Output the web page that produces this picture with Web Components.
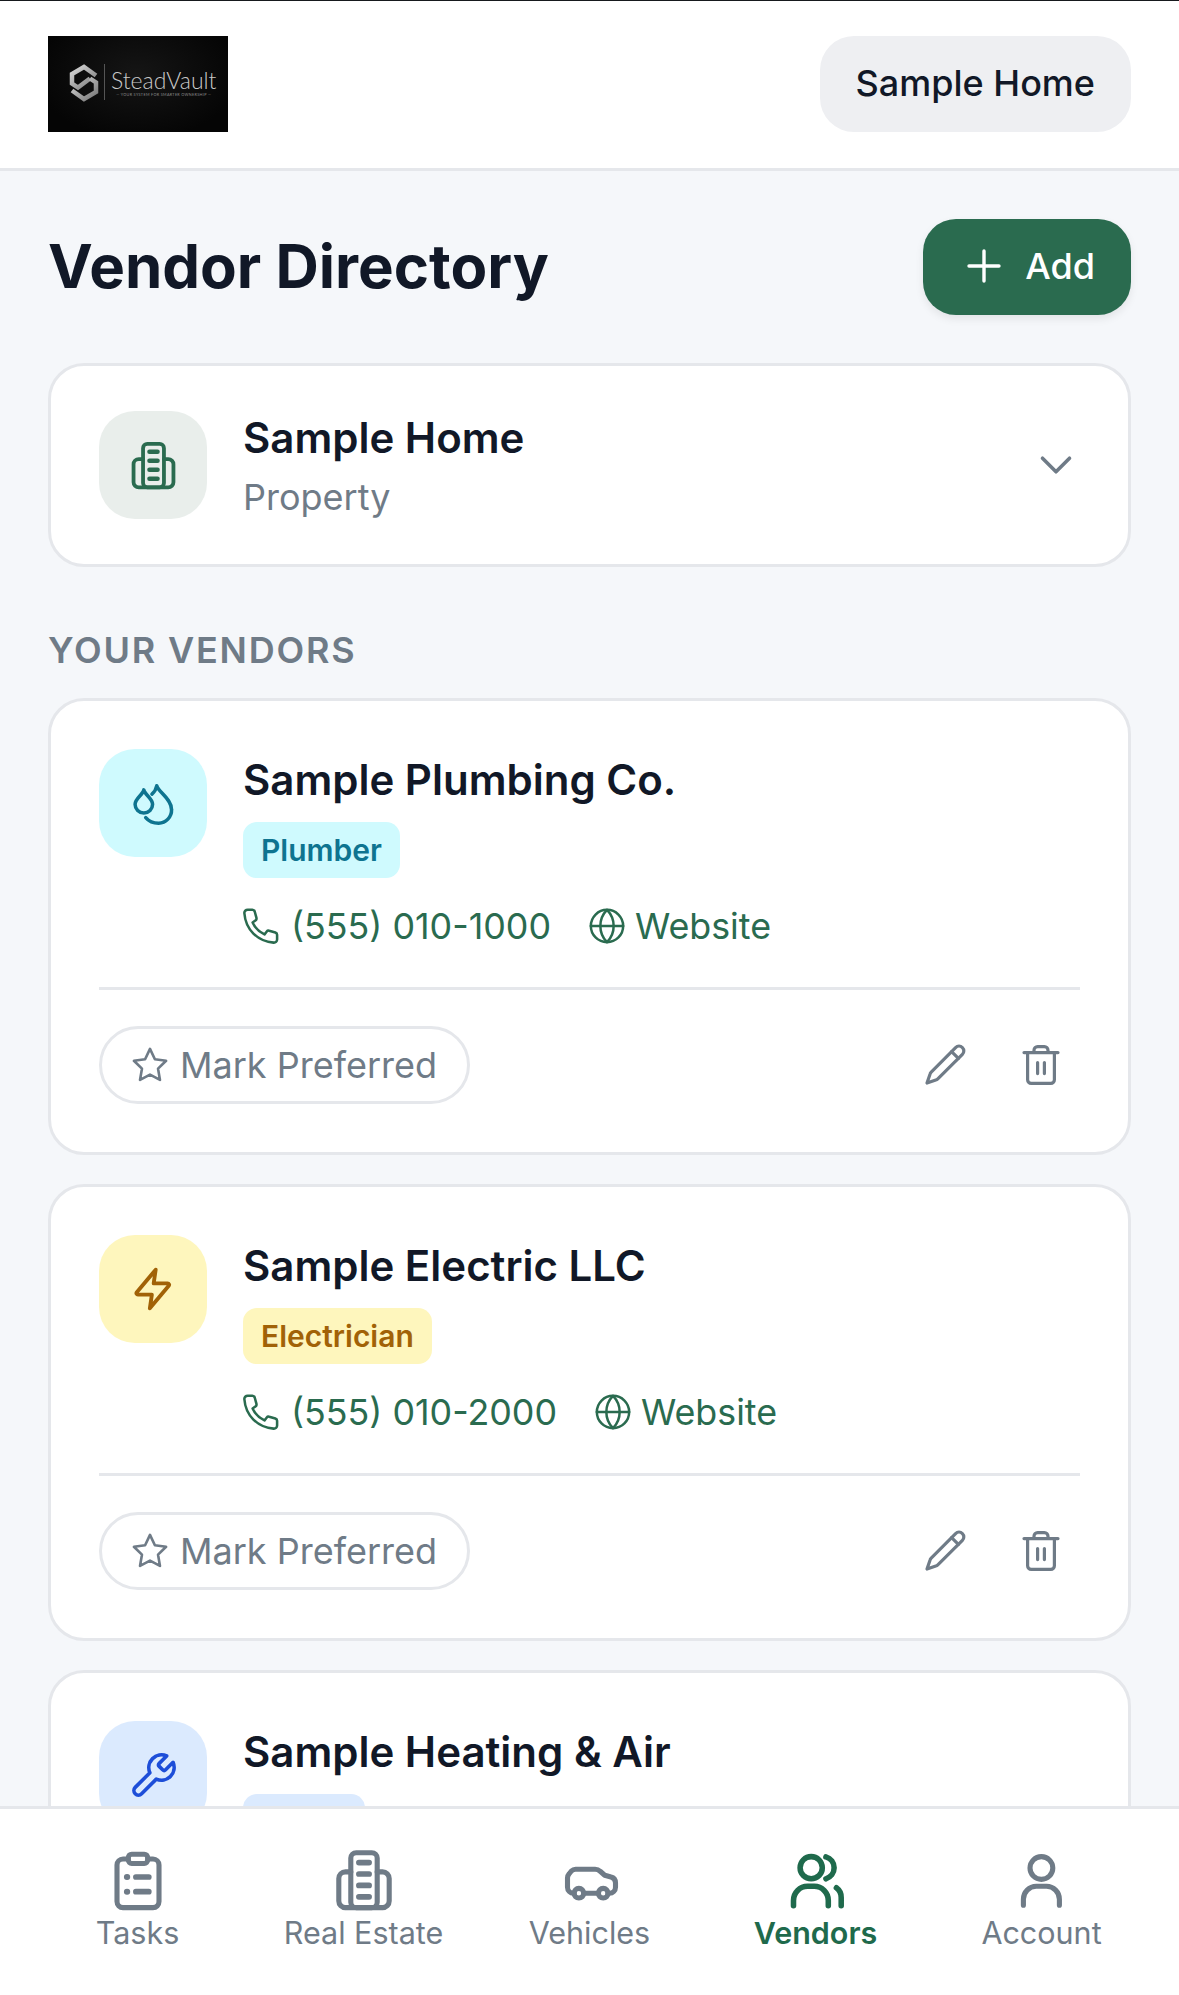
<!DOCTYPE html>
<html lang="en">
<head>
<meta charset="utf-8">
<title>Vendor Directory</title>
<style>
  html, body { margin: 0; height: 100%; }
  body { font-family: Inter, "Liberation Sans", sans-serif; background: #f5f7fa; color: #111827; overflow: hidden; }
</style>
</head>
<body>
<vendor-app>
  <top-bar slot="top"></top-bar>
  <page-title slot="main">Vendor Directory</page-title>
  <property-select slot="main" name="Sample Home" sub="Property"></property-select>
  <section-label slot="main">YOUR VENDORS</section-label>
  <vendor-card slot="main" name="Sample Plumbing Co." kind="Plumber" phone="(555) 010-1000" icon="drops" isize="50" bg="#cffafe" fg="#0e7490"></vendor-card>
  <vendor-card slot="main" name="Sample Electric LLC" kind="Electrician" phone="(555) 010-2000" icon="bolt" isize="54" bg="#fef6bd" fg="#a16207"></vendor-card>
  <!-- only the top of this one shows above the nav -->
  <vendor-card slot="main" name="Sample Heating &amp; Air" icon="wrench" isize="51" bg="#dbeafe" fg="#1d4ed8"></vendor-card>
  <bottom-nav slot="nav"></bottom-nav>
</vendor-app>

<script>
  // icon paths, all on a 24 unit box
  const ICONS = {
    building: '<rect x="7.6" y="2.9" width="8.8" height="18.3" rx="1.8"/><path d="M7.600 9.300H5.800a2.200 2.200 0 0 0-2.200 2.200V19a2.200 2.200 0 0 0 2.200 2.200h12.400a2.200 2.200 0 0 0 2.200-2.200v-7.500a2.200 2.200 0 0 0-2.200-2.200h-1.800"/><path d="M10.300 6.200h3.400M10.300 10h3.400M10.300 13.800h3.400M10.300 17.600h3.400" stroke-width="1.900"/>',
    plus: '<path d="M12 4.500v15M4.500 12h15"/>',
    chevron: '<path d="M6 9l6 6 6-6"/>',
    drops: '<path d="M7.600 5.700C8 8 11.800 9.800 11.800 12.600A4.200 4.200 0 0 1 3.400 12.600C3.400 9.800 7.200 8 7.600 5.700z"/><path d="M11.500 7.700C12.700 6.700 13.500 5.300 13.800 3.700C14.400 6.700 20.900 9.800 20.900 15.200A6.300 6.300 0 0 1 14.700 21.700C12.300 21.700 10 20.800 8.500 19"/>',
    bolt: '<path d="M13.200 3.400 4.800 13.400c-.4.500-.1 1.100.5 1.100h6.200l-.9 6.100 8.400-10c.4-.5.1-1.100-.5-1.100h-6.200z"/>',
    wrench: '<path d="M14.700 6.300a1 1 0 0 0 0 1.400l1.600 1.600a1 1 0 0 0 1.400 0l3.500-3.500a6 6 0 0 1-7.900 7.900l-6.900 6.900a2.100 2.100 0 0 1-3-3l6.900-6.900a6 6 0 0 1 7.900-7.900z"/>',
    phone: '<path d="M4.400 2.700h2.700c.6 0 1.100.4 1.300 1l1 3.700c.1.500 0 1-.4 1.300L7.200 10c1.300 2.900 3.700 5.300 6.800 6.800l1.300-1.700c.3-.4.900-.6 1.400-.4l3.500 1c.6.200 1 .7 1 1.300v2.700c0 1.100-.9 1.900-2 1.800C10 20.800 3.200 14 2.500 4.700c-.1-1.100.8-2 1.900-2z"/>',
    globe: '<circle cx="12" cy="12" r="9.700"/><path d="M2.300 12h19.400M12 2.300c2.600 2.600 4 6 4 9.700s-1.400 7.100-4 9.700c-2.600-2.600-4-6-4-9.700s1.400-7.100 4-9.700z"/>',
    star: '<path d="M12 2.800l2.800 5.900 6.400.9-4.600 4.500 1.100 6.400L12 17.500l-5.700 3 1.100-6.400-4.600-4.500 6.400-.9z"/>',
    pencil: '<path d="M17.300 3.300a2.400 2.400 0 0 1 3.400 3.400L8.400 18.900c-.3.300-.6.500-1 .6l-4.400 1.500 1.500-4.400c.1-.4.300-.7.600-1z"/><path d="M15.300 5.300l3.400 3.400"/>',
    trash: '<path d="M3.500 5.800h17M8.500 5.800V4.600c0-1 .8-1.800 1.800-1.800h3.400c1 0 1.800.8 1.800 1.800v1.200M5.300 5.800v13.600c0 1 .8 1.800 1.800 1.800h9.800c1 0 1.800-.8 1.800-1.800V5.800"/><path d="M10.300 10.800v5.500M13.700 10.800v5.500"/>',
    tasks: '<rect x="5" y="5" width="14" height="16.200" rx="2"/><rect x="8.800" y="3.400" width="6.400" height="3.100" rx="1.100" fill="#fff"/><path d="M11.300 11h4.300M11.300 15.900h4.300" stroke-width="1.900"/><path d="M8.300 11h.1M8.300 15.900h.1" stroke-width="2"/>',
    car: '<path d="M6.700 16.400h-.2a2 2 0 0 1-2-2v-3.100a2 2 0 0 1 .5-1.300l.8-1a2 2 0 0 1 1.500-.6h6.400a2.500 2.500 0 0 1 1.700.7l1.500 1.300 2.100.6a2 2 0 0 1 1.500 1.900v1.500a2 2 0 0 1-2 2H18M9.900 16.400h4.900"/><circle cx="8.300" cy="16.400" r="1.600"/><circle cx="16.400" cy="16.400" r="1.600"/>',
    users: '<circle cx="10.400" cy="7.900" r="3.700"/><path d="M15.300 4.300a3.800 3.800 0 0 1 0 7.300M4.500 20.600v-1.800a4.700 4.700 0 0 1 4.700-4.700h2.200a4.700 4.700 0 0 1 4.700 4.700v1.800M18.800 14.600a4 4 0 0 1 1.600 3.200v2.800"/>',
    user: '<circle cx="11.800" cy="8" r="3.800"/><path d="M5.800 20.400v-2a4.300 4.300 0 0 1 4.300-4.300h3.400a4.300 4.300 0 0 1 4.300 4.300v2"/>'
  };

  class IconGlyph extends HTMLElement {
    connectedCallback() {
      const size = this.getAttribute("size") || 48;
      const sw = this.getAttribute("sw") || 1.5;
      this.attachShadow({ mode: "open" }).innerHTML = `
        <style>
          :host { display: block; width: ${size}px; height: ${size}px; flex: none; }
          svg { display: block; width: 100%; height: 100%; }
        </style>
        <svg viewBox="0 0 24 24" fill="none" stroke="currentColor" stroke-width="${sw}"
          stroke-linecap="round" stroke-linejoin="round">${ICONS[this.getAttribute("name")]}</svg>`;
    }
  }
  customElements.define("icon-glyph", IconGlyph);

  class VendorApp extends HTMLElement {
    constructor() {
      super();
      this.attachShadow({ mode: "open" }).innerHTML = `
        <style>
          :host { display: flex; flex-direction: column; height: 1995px; width: 1179px; border-top: 1px solid #16191d; box-sizing: border-box; }
          main { flex: 1; min-height: 0; overflow: hidden; padding: 48px 48px 0; box-sizing: border-box; }
        </style>
        <slot name="top"></slot>
        <main><slot name="main"></slot></main>
        <slot name="nav"></slot>`;
    }
  }
  customElements.define("vendor-app", VendorApp);

  class TopBar extends HTMLElement {
    constructor() {
      super();
      this.attachShadow({ mode: "open" }).innerHTML = `
        <style>
          :host { display: flex; justify-content: space-between; align-items: center; height: 170px; padding: 35px 48px 37px; box-sizing: border-box; background: #fff; border-bottom: 3px solid #e5e7eb; }
          .logo { width: 180px; height: 96px; background: radial-gradient(ellipse at 50% 40%, #151515, #050505 80%); display: flex; align-items: center; padding-left: 21px; box-sizing: border-box; gap: 5px; color: #c6c6c6; }
          .logo svg { width: 30px; height: 38px; flex: none; margin-top: -2px; }
          .rule { width: 1px; height: 36px; background: #555; margin-right: 1px; margin-top: -3px; }
          .words { display: flex; flex-direction: column; align-items: center; margin-top: -1px; }
          .brand { font: 300 23px/24px Lato, "Open Sans", sans-serif; color: #c8c8c8; }
          .tag { font: 400 3.800px/6px Lato, sans-serif; letter-spacing: .3px; color: #8a8a8a; white-space: nowrap; }
          .pill { height: 96px; padding: 0 36px 2px; display: flex; align-items: center; box-sizing: border-box; background: #eeeff2; border-radius: 34px; font-size: 36px; font-weight: 500; color: #111827; }
        </style>
        <div class="logo">
          <svg viewBox="0 0 30 38" fill="none" stroke="url(#m)" stroke-width="4.500" stroke-linejoin="miter">
            <defs><linearGradient id="m" x1="0" y1="0" x2="1" y2="1"><stop offset="0" stop-color="#d8d8d8"/><stop offset="1" stop-color="#777"/></linearGradient></defs>
            <path d="M27 11.500 15 3 3 10v9.500l6 4 12-9"/>
            <path d="M3 26.500 15 35l12-7v-9.500l-6-4"/>
          </svg>
          <div class="rule"></div>
          <div class="words"><span class="brand">SteadVault</span><span class="tag">— YOUR SYSTEM FOR SMARTER OWNERSHIP —</span></div>
        </div>
        <div class="pill">Sample Home</div>`;
    }
  }
  customElements.define("top-bar", TopBar);

  class PageTitle extends HTMLElement {
    constructor() {
      super();
      this.attachShadow({ mode: "open" }).innerHTML = `
        <style>
          :host { display: flex; justify-content: space-between; align-items: center; height: 96px; margin-bottom: 48px; }
          h1 { margin: -2px 0 0; font-size: 60px; font-weight: 700; color: #111827; }
          button { all: unset; display: flex; align-items: center; gap: 17px; height: 96px; padding: 0 36px 2px 37px; box-sizing: border-box; background: #2a6b4f; color: #fff; border-radius: 33px; font-size: 36px; font-weight: 500; box-shadow: 0 4px 9px rgba(0,0,0,.08); }
        </style>
        <h1><slot></slot></h1>
        <button><icon-glyph name="plus" size="48" sw="1.700"></icon-glyph>Add</button>`;
    }
  }
  customElements.define("page-title", PageTitle);

  class PropertySelect extends HTMLElement {
    connectedCallback() {
      this.attachShadow({ mode: "open" }).innerHTML = `
        <style>
          :host { display: flex; align-items: flex-start; gap: 36px; background: #fff; border: 3px solid #e5e7eb; border-radius: 36px; padding: 45px 45px 45px 48px; }
          .ico { width: 108px; height: 108px; border-radius: 36px; background: #e9eeeb; color: #2a6b4f; display: flex; align-items: center; justify-content: center; flex: none; }
          .txt { flex: 1; margin-bottom: -5px; }
          .name { font-size: 42px; line-height: 54px; font-weight: 600; color: #111827; }
          .sub { font-size: 36px; line-height: 54px; margin-top: 5px; color: #6f7b87; }
          .chev { color: #6f7b87; align-self: center; }
        </style>
        <div class="ico"><icon-glyph name="building" size="57" sw="1.600"></icon-glyph></div>
        <div class="txt"><div class="name">${this.getAttribute("name")}</div><div class="sub">${this.getAttribute("sub")}</div></div>
        <icon-glyph class="chev" name="chevron" size="54" sw="1.600"></icon-glyph>`;
    }
  }
  customElements.define("property-select", PropertySelect);

  class SectionLabel extends HTMLElement {
    constructor() {
      super();
      this.attachShadow({ mode: "open" }).innerHTML = `
        <style>
          :host { display: block; margin: 56px 0 21px; font-size: 36px; line-height: 54px; font-weight: 600; letter-spacing: 1.800px; color: #6f7b87; }
        </style>
        <slot></slot>`;
    }
  }
  customElements.define("section-label", SectionLabel);

  class VendorCard extends HTMLElement {
    connectedCallback() {
      const a = n => this.getAttribute(n);
      const full = this.hasAttribute("phone");
      this.attachShadow({ mode: "open" }).innerHTML = `
        <style>
          :host { display: block; background: #fff; border: 3px solid #e5e7eb; border-radius: 36px; padding: 48px 48px 48px; margin-bottom: 29px; }
          .head { display: flex; gap: 36px; }
          .ico { width: 108px; height: 108px; border-radius: 36px; background: ${a("bg")}; color: ${a("fg")}; display: flex; align-items: center; justify-content: center; flex: none; }
          .info { padding-top: 4px; min-width: 0; }
          .name { font-size: 42px; line-height: 54px; font-weight: 600; color: #111827; }
          .badge { display: block; width: fit-content; min-width: 86px; margin-top: 15px; height: 56px; line-height: 56px; padding: 0 18px; border-radius: 14px; background: ${a("bg")}; color: ${a("fg")}; font-size: 30px; font-weight: 600; }
          .links { display: flex; align-items: center; height: 54px; margin-top: 21px; color: #2a6b4f; font-size: 35.800px; gap: 36px; }
          .link { display: flex; align-items: center; gap: 8px; }
          .link:first-child { margin-left: -3px; gap: 9px; }
          hr { border: 0; height: 3px; background: #e5e7eb; margin: 34px 0 36px; }
          .foot { display: flex; align-items: center; color: #6f7b87; }
          .pref { all: unset; display: flex; align-items: center; gap: 9px; height: 72px; padding: 0 30px 0 27px; border: 3px solid #e5e7eb; border-radius: 39px; font-size: 36px; color: #6f7b87; }
          .tools { margin-left: auto; display: flex; gap: 18px; }
          .tools span { width: 78px; height: 78px; display: flex; align-items: center; justify-content: center; }
        </style>
        <div class="head">
          <div class="ico"><icon-glyph name="${a("icon")}" size="${a("isize")}" sw="1.700"></icon-glyph></div>
          <div class="info">
            <div class="name">${a("name")}</div>
            <div class="badge">${a("kind") || ""}</div>
            ${full ? `<div class="links">
              <span class="link"><icon-glyph name="phone" size="42" sw="1.450"></icon-glyph>${a("phone")}</span>
              <span class="link"><icon-glyph name="globe" size="40" sw="1.500"></icon-glyph>Website</span>
            </div>` : ""}
          </div>
        </div>
        ${full ? `<hr>
        <div class="foot">
          <button class="pref"><icon-glyph name="star" size="42" sw="1.500"></icon-glyph>Mark Preferred</button>
          <div class="tools">
            <span><icon-glyph name="pencil" size="48" sw="1.600"></icon-glyph></span>
            <span><icon-glyph name="trash" size="48" sw="1.600"></icon-glyph></span>
          </div>
        </div>` : ""}`;
    }
  }
  customElements.define("vendor-card", VendorCard);

  class BottomNav extends HTMLElement {
    constructor() {
      super();
      const tabs = [
        ["tasks", "Tasks"], ["building", "Real Estate"], ["car", "Vehicles"],
        ["users", "Vendors", true], ["user", "Account"]
      ];
      this.attachShadow({ mode: "open" }).innerHTML = `
        <style>
          :host { display: grid; grid-template-columns: repeat(5, 226px); justify-content: center; height: 189px; padding-top: 35px; box-sizing: border-box; background: #fff; border-top: 3px solid #e5e7eb; position: relative; }
          .tab { display: flex; flex-direction: column; align-items: center; color: #6f7b87; font-size: 30.500px; line-height: 42px; }
          .tab.on { color: #1f6a4c; font-weight: 600; }
          span { margin-top: -4px; }
        </style>
        ${tabs.map(t => `<div class="tab${t[2] ? " on" : ""}"><icon-glyph name="${t[0]}" size="72" sw="${t[2] ? 1.85 : 1.7}"></icon-glyph><span>${t[1]}</span></div>`).join("")}`;
    }
  }
  customElements.define("bottom-nav", BottomNav);
</script>
</body>
</html>
